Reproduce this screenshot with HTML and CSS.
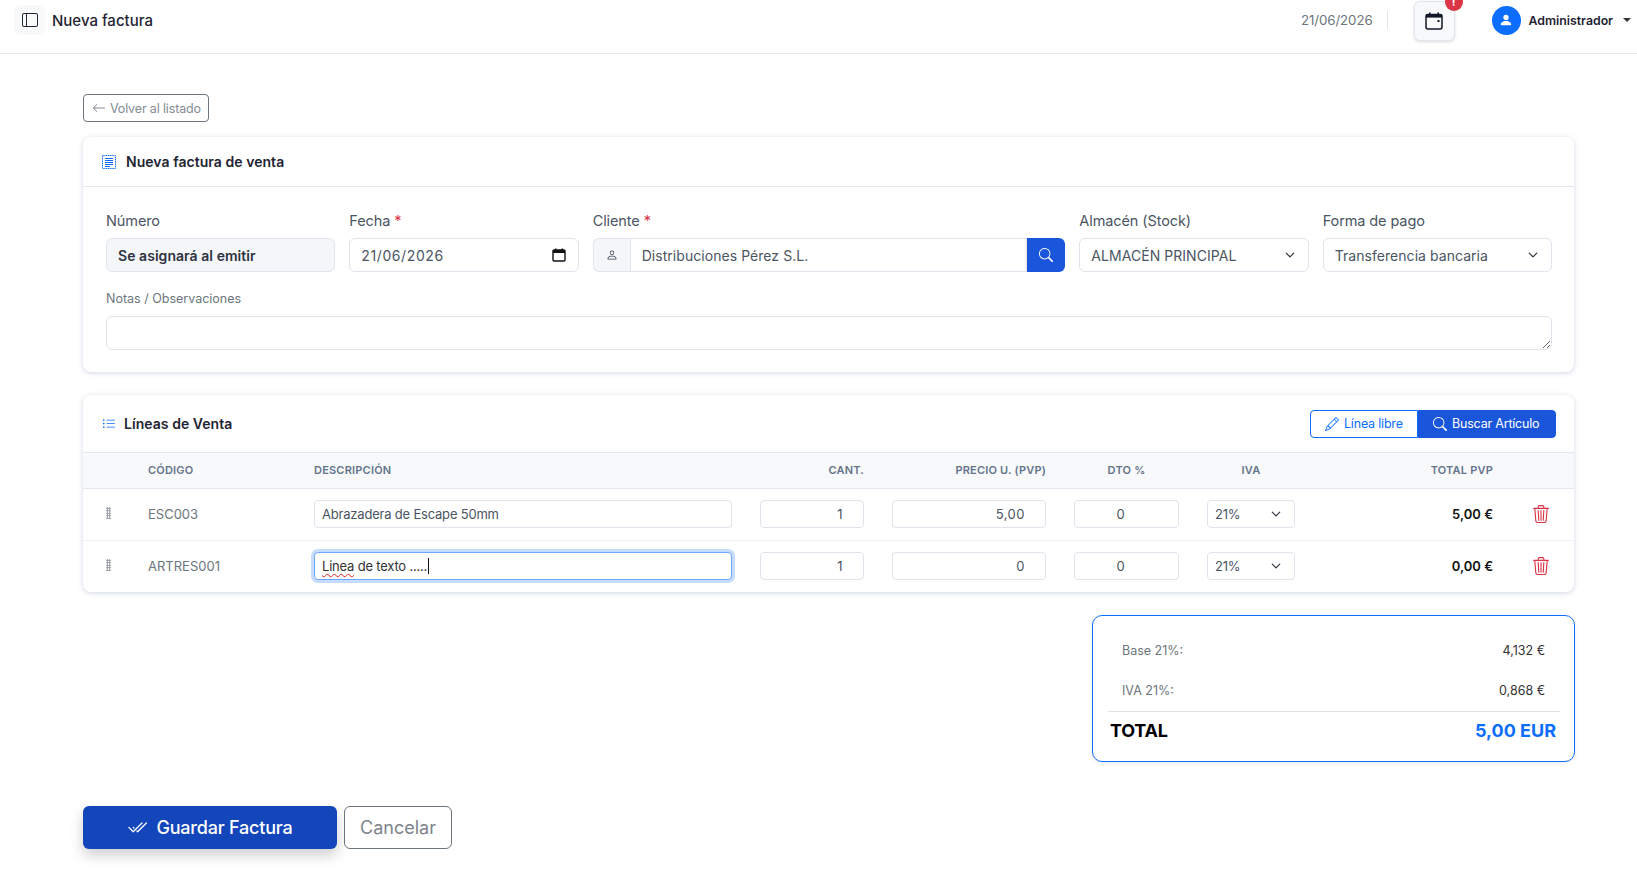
FILE: index.html
```html
<!DOCTYPE html>
<html lang="es">
<head>
  <meta charset="UTF-8" />
  <meta name="viewport" content="width=device-width, initial-scale=1.0"/>
  <title>Nueva factura</title>
  <link rel="stylesheet" href="styles.css">
</head>
<body>

  <header class="topbar">
    <button class="sidebar-toggle">
      <svg width="16" height="16" viewBox="0 0 16 16" fill="currentColor"><path d="M0 3a2 2 0 0 1 2-2h12a2 2 0 0 1 2 2v10a2 2 0 0 1-2 2H2a2 2 0 0 1-2-2V3zm5-1v12h9a1 1 0 0 0 1-1V3a1 1 0 0 0-1-1H5zM4 2H2a1 1 0 0 0-1 1v10a1 1 0 0 0 1 1h2V2z"/></svg>
    </button>
    <h1 class="page-title">Nueva factura</h1>
    <div class="topbar-right">
      <span class="top-date">21/06/2026</span>
      <span class="top-sep"></span>
      <button class="calendar-btn">
        <svg width="18" height="18" viewBox="0 0 18 18"><rect x="1" y="2.5" width="16" height="14.5" rx="2" fill="none" stroke="#111827" stroke-width="1.5"/><rect x="1" y="2" width="16" height="3.6" fill="#111827"/><rect x="4" y="0.5" width="1.6" height="2.5" fill="#111827"/><rect x="12.4" y="0.5" width="1.6" height="2.5" fill="#111827"/><rect x="12.5" y="8" width="2" height="2" fill="#111827"/></svg>
        <span class="calendar-badge">!</span>
      </button>
      <div class="user">
        <span class="avatar">
          <svg width="14" height="14" viewBox="0 0 16 16" fill="#fff"><path d="M8 8a3 3 0 1 0 0-6 3 3 0 0 0 0 6zM3 14s-1 0-1-1 1-4 6-4 6 3 6 4-1 1-1 1H3z"/></svg>
        </span>
        <span class="user-name">Administrador</span>
        <span class="user-caret"></span>
      </div>
    </div>
  </header>

  <main class="content">
    <a class="btn-back" href="#">
      <svg width="14" height="14" viewBox="0 0 16 16" fill="currentColor"><path d="M15 8a.5.5 0 0 0-.5-.5H2.707l3.147-3.146a.5.5 0 1 0-.708-.708l-4 4a.5.5 0 0 0 0 .708l4 4a.5.5 0 0 0 .708-.708L2.707 8.5H14.5A.5.5 0 0 0 15 8z"/></svg>
      Volver al listado
    </a>

    <section class="card">
      <div class="card-head">
        <svg class="head-icon" width="14" height="14" viewBox="0 0 14 14" fill="none" stroke="#0d6efd"><rect x="0.5" y="0.5" width="13" height="13" stroke-dasharray="1.2 .6"/><path d="M3 3.5h8M3 5.5h8M3 7.5h8M3 9.5h8M3 11.5h5"/></svg>
        <h2>Nueva factura de venta</h2>
      </div>
      <div class="form-grid">
        <div class="field span-2">
          <label>Número</label>
          <input class="input input-readonly" type="text" value="Se asignará al emitir" readonly />
        </div>
        <div class="field span-2">
          <label>Fecha <em>*</em></label>
          <div class="date-box">
            <input class="input input-date" type="text" value="21/06/2026" />
            <svg width="14" height="14" viewBox="0 0 14 14"><rect x="1" y="2" width="12" height="11" rx="1" fill="none" stroke="#111" stroke-width="1.4"/><rect x="1" y="2" width="12" height="3" fill="#111"/><rect x="3" y="0.5" width="1.5" height="2" fill="#111"/><rect x="9.5" y="0.5" width="1.5" height="2" fill="#111"/></svg>
          </div>
        </div>
        <div class="field span-4">
          <label>Cliente <em>*</em></label>
          <div class="input-group">
            <span class="group-icon">
              <svg width="12" height="12" viewBox="0 0 16 16" fill="#374151"><path d="M8 8a3 3 0 1 0 0-6 3 3 0 0 0 0 6zm2-3a2 2 0 1 1-4 0 2 2 0 0 1 4 0zm4 8c0 1-1 1-1 1H3s-1 0-1-1 1-4 6-4 6 3 6 4zm-1-.004c-.001-.246-.154-.986-.832-1.664C11.516 10.68 10.289 10 8 10c-2.29 0-3.516.68-4.168 1.332-.678.678-.83 1.418-.832 1.664h10z"/></svg>
            </span>
            <input class="input" type="text" value="Distribuciones Pérez S.L." />
            <button class="group-btn">
              <svg width="14" height="14" viewBox="0 0 16 16" fill="#fff"><path d="M11.742 10.344a6.5 6.5 0 1 0-1.397 1.398h-.001c.03.04.062.078.098.115l3.85 3.85a1 1 0 0 0 1.415-1.414l-3.85-3.85a1.007 1.007 0 0 0-.115-.1zM12 6.5a5.5 5.5 0 1 1-11 0 5.5 5.5 0 0 1 11 0z"/></svg>
            </button>
          </div>
        </div>
        <div class="field span-2">
          <label>Almacén (Stock)</label>
          <select class="input select"><option>ALMACÉN PRINCIPAL</option></select>
        </div>
        <div class="field span-2">
          <label>Forma de pago</label>
          <select class="input select"><option>Transferencia bancaria</option></select>
        </div>
        <div class="field span-12">
          <label class="label-small">Notas / Observaciones</label>
          <textarea class="input notes"></textarea>
        </div>
      </div>
    </section>

    <section class="card card-lines">
      <div class="card-head lines-head">
        <svg class="head-icon" width="14" height="14" viewBox="0 0 16 16" fill="#0d6efd"><path fill-rule="evenodd" d="M5 11.5a.5.5 0 0 1 .5-.5h9a.5.5 0 0 1 0 1h-9a.5.5 0 0 1-.5-.5zm0-4a.5.5 0 0 1 .5-.5h9a.5.5 0 0 1 0 1h-9a.5.5 0 0 1-.5-.5zm0-4a.5.5 0 0 1 .5-.5h9a.5.5 0 0 1 0 1h-9a.5.5 0 0 1-.5-.5zm-3 1a1 1 0 1 0 0-2 1 1 0 0 0 0 2zm0 4a1 1 0 1 0 0-2 1 1 0 0 0 0 2zm0 4a1 1 0 1 0 0-2 1 1 0 0 0 0 2z"/></svg>
        <h2>Líneas de Venta</h2>
        <div class="btn-group">
          <button class="btn-free">
            <svg width="14" height="14" viewBox="0 0 16 16" fill="currentColor"><path d="M12.146.146a.5.5 0 0 1 .708 0l3 3a.5.5 0 0 1 0 .708l-10 10a.5.5 0 0 1-.168.11l-5 2a.5.5 0 0 1-.65-.65l2-5a.5.5 0 0 1 .11-.168l10-10zM11.207 2.5 13.5 4.793 14.793 3.5 12.5 1.207 11.207 2.5zm1.586 3L10.5 3.207 4 9.707V10h.5a.5.5 0 0 1 .5.5v.5h.5a.5.5 0 0 1 .5.5v.5h.293l6.5-6.5zm-9.761 5.175-.106.106-1.528 3.821 3.821-1.528.106-.106A.5.5 0 0 1 5 12.5V12h-.5a.5.5 0 0 1-.5-.5V11h-.5a.5.5 0 0 1-.468-.325z"/></svg>
            Línea libre
          </button>
          <button class="btn-search">
            <svg width="14" height="14" viewBox="0 0 16 16" fill="currentColor"><path d="M11.742 10.344a6.5 6.5 0 1 0-1.397 1.398h-.001c.03.04.062.078.098.115l3.85 3.85a1 1 0 0 0 1.415-1.414l-3.85-3.85a1.007 1.007 0 0 0-.115-.1zM12 6.5a5.5 5.5 0 1 1-11 0 5.5 5.5 0 0 1 11 0z"/></svg>
            Buscar Artículo
          </button>
        </div>
      </div>

      <table class="lines">
        <colgroup>
          <col class="c-drag"><col class="c-code"><col class="c-desc"><col class="c-qty"><col class="c-price"><col class="c-dto"><col class="c-iva"><col class="c-total"><col class="c-del">
        </colgroup>
        <thead>
          <tr>
            <th></th>
            <th>CÓDIGO</th>
            <th>DESCRIPCIÓN</th>
            <th class="right">CANT.</th>
            <th class="right">PRECIO U. (PVP)</th>
            <th class="center">DTO %</th>
            <th class="center">IVA</th>
            <th class="right">TOTAL PVP</th>
            <th></th>
          </tr>
        </thead>
        <tbody>
          <tr>
            <td class="drag"><span class="grip"></span></td>
            <td class="code">ESC003</td>
            <td><input class="cell-input" type="text" value="Abrazadera de Escape 50mm" /></td>
            <td><input class="cell-input num" type="text" value="1" /></td>
            <td><input class="cell-input num" type="text" value="5,00" /></td>
            <td><input class="cell-input dto" type="text" value="0" /></td>
            <td><select class="cell-input select-sm"><option>21%</option></select></td>
            <td class="total">5,00 €</td>
            <td class="del">
              <svg width="18" height="18" viewBox="0 0 16 16" fill="#dc3545"><path d="M6.5 1h3a.5.5 0 0 1 .5.5v1H6v-1a.5.5 0 0 1 .5-.5ZM11 2.5v-1A1.5 1.5 0 0 0 9.5 0h-3A1.5 1.5 0 0 0 5 1.5v1H2.506a.58.58 0 0 0-.01 0H1.5a.5.5 0 0 0 0 1h.538l.853 10.66A2 2 0 0 0 4.885 16h6.23a2 2 0 0 0 1.994-1.84l.853-10.66h.538a.5.5 0 0 0 0-1h-.995a.59.59 0 0 0-.01 0H11Zm1.958 1-.846 10.58a1 1 0 0 1-.997.92h-6.23a1 1 0 0 1-.997-.92L3.042 3.5h9.916Zm-7.487 1a.5.5 0 0 1 .528.47l.5 8.5a.5.5 0 0 1-.998.06L5 5.03a.5.5 0 0 1 .47-.53Zm5.058 0a.5.5 0 0 1 .47.53l-.5 8.5a.5.5 0 1 1-.998-.06l.5-8.5a.5.5 0 0 1 .528-.47ZM8 4.5a.5.5 0 0 1 .5.5v8.5a.5.5 0 0 1-1 0V5a.5.5 0 0 1 .5-.5Z"/></svg>
            </td>
          </tr>
          <tr>
            <td class="drag"><span class="grip"></span></td>
            <td class="code">ARTRES001</td>
            <td>
              <div class="cell-input cell-focus"><span class="typo">Linea</span> de texto .....<span class="caret"></span></div>
            </td>
            <td><input class="cell-input num" type="text" value="1" /></td>
            <td><input class="cell-input num" type="text" value="0" /></td>
            <td><input class="cell-input dto" type="text" value="0" /></td>
            <td><select class="cell-input select-sm"><option>21%</option></select></td>
            <td class="total">0,00 €</td>
            <td class="del">
              <svg width="18" height="18" viewBox="0 0 16 16" fill="#dc3545"><path d="M6.5 1h3a.5.5 0 0 1 .5.5v1H6v-1a.5.5 0 0 1 .5-.5ZM11 2.5v-1A1.5 1.5 0 0 0 9.5 0h-3A1.5 1.5 0 0 0 5 1.5v1H2.506a.58.58 0 0 0-.01 0H1.5a.5.5 0 0 0 0 1h.538l.853 10.66A2 2 0 0 0 4.885 16h6.23a2 2 0 0 0 1.994-1.84l.853-10.66h.538a.5.5 0 0 0 0-1h-.995a.59.59 0 0 0-.01 0H11Zm1.958 1-.846 10.58a1 1 0 0 1-.997.92h-6.23a1 1 0 0 1-.997-.92L3.042 3.5h9.916Zm-7.487 1a.5.5 0 0 1 .528.47l.5 8.5a.5.5 0 0 1-.998.06L5 5.03a.5.5 0 0 1 .47-.53Zm5.058 0a.5.5 0 0 1 .47.53l-.5 8.5a.5.5 0 1 1-.998-.06l.5-8.5a.5.5 0 0 1 .528-.47ZM8 4.5a.5.5 0 0 1 .5.5v8.5a.5.5 0 0 1-1 0V5a.5.5 0 0 1 .5-.5Z"/></svg>
            </td>
          </tr>
        </tbody>
      </table>
    </section>

    <div class="totals-row">
      <div class="totals">
        <div class="totals-line"><span>Base 21%:</span><strong>4,132 €</strong></div>
        <div class="totals-line"><span>IVA 21%:</span><strong>0,868 €</strong></div>
        <div class="totals-final"><span>TOTAL</span><strong>5,00 EUR</strong></div>
      </div>
    </div>

    <div class="actions">
      <button class="btn-save">
        <svg width="20" height="20" viewBox="0 0 16 16" fill="currentColor"><path d="M12.354 4.354a.5.5 0 0 0-.708-.708L5 10.293 1.854 7.146a.5.5 0 1 0-.708.708l3.5 3.5a.5.5 0 0 0 .708 0l7-7zm-4.208 7-.896-.897.707-.707.543.543 6.646-6.647a.5.5 0 0 1 .708.708l-7 7a.5.5 0 0 1-.708 0z"/><path d="m5.354 7.146.896.897-.707.707-.897-.896a.5.5 0 1 1 .708-.708z"/></svg>
        Guardar Factura
      </button>
      <button class="btn-cancel">Cancelar</button>
    </div>
  </main>

</body>
</html>
```

FILE: styles.css
```css
* {
  box-sizing: border-box;
}

body {
  margin: 0;
  font-family: 'Inter', 'Liberation Sans', sans-serif;
  color: #212529;
  background: #fff;
  height: 881px;
  overflow: hidden;
}

button {
  font-family: inherit;
  cursor: pointer;
}

/* top bar */
.topbar {
  display: flex;
  align-items: center;
  height: 54px;
  padding: 0 0 13px 14px;
  border-bottom: 1px solid #e2e6ef;
}

.sidebar-toggle {
  display: flex;
  align-items: center;
  justify-content: center;
  width: 31px;
  height: 30px;
  border: none;
  border-radius: 6px;
  background: #f8f9fb;
  color: #1f2937;
}

.page-title {
  margin: 0 0 0 7px;
  font-size: 15px;
  font-weight: 500;
  color: #1f2433;
}

.topbar-right {
  margin-left: auto;
  display: flex;
  align-items: center;
}

.top-date {
  font-size: 13.3px;
  color: #6c757d;
  letter-spacing: -0.1px;
}

.top-sep {
  width: 1px;
  height: 18px;
  margin: 0 26px 0 14px;
  background: #dfe3ea;
}

.calendar-btn {
  position: relative;
  display: flex;
  align-items: center;
  justify-content: center;
  width: 41px;
  height: 40px;
  margin-top: 1px;
  border: 1px solid #e2e6ef;
  border-radius: 6px;
  background: #f8f9fb;
  box-shadow: 0 1px 3px rgba(0, 0, 0, 0.15);
}

.calendar-badge {
  position: absolute;
  top: -9px;
  right: -9px;
  width: 18px;
  height: 18px;
  border-radius: 50%;
  background: #dc3545;
  color: #fff;
  font-size: 11px;
  font-weight: 700;
  line-height: 18px;
  text-align: center;
}

.user {
  display: flex;
  align-items: center;
  margin-left: 37px;
  padding-right: 6px;
}

.avatar {
  display: flex;
  align-items: center;
  justify-content: center;
  width: 29px;
  height: 29px;
  border-radius: 50%;
  background: #0d6efd;
}

.user-name {
  margin-left: 8px;
  font-size: 12.3px;
  font-weight: 600;
  color: #1f2433;
}

.user-caret {
  width: 0;
  height: 0;
  margin-left: 10px;
  border-top: 4px solid #333;
  border-left: 4px solid transparent;
  border-right: 4px solid transparent;
}

/* content */
.content {
  padding: 40px 63px 0 83px;
}

.btn-back {
  display: inline-flex;
  align-items: center;
  gap: 4px;
  height: 28px;
  padding: 0 7px 0 8px;
  border: 1px solid #6c757d;
  border-radius: 4px;
  font-size: 12.5px;
  color: #858c94;
  text-decoration: none;
  letter-spacing: -0.15px;
}

.card {
  margin-top: 15px;
  border-radius: 8px;
  background: #fff;
  box-shadow: 0 1px 5px rgba(120, 135, 170, 0.35);
}

.card-head {
  display: flex;
  align-items: center;
  height: 50px;
  padding: 0 19px;
  border-bottom: 1px solid #e2e6ef;
}

.card-head h2 {
  margin: 0 0 0 8px;
  font-size: 14px;
  font-weight: 600;
  color: #1f2433;
  letter-spacing: 0.05px;
}

.head-icon {
  flex: none;
  margin-right: 2px;
}

.form-grid {
  display: grid;
  grid-template-columns: repeat(12, 1fr);
  column-gap: 14px;
  padding: 25px 22px 22px 23px;
}

.field label {
  display: block;
  height: 18px;
  margin-bottom: 8px;
  font-size: 14.5px;
  line-height: 18px;
  color: #4b5563;
  letter-spacing: -0.1px;
}

.field em {
  font-style: normal;
  color: #dc3545;
}

.span-2 { grid-column: span 2; }
.span-4 { grid-column: span 4; }
.span-12 { grid-column: span 12; margin-top: 19px; }

.field .label-small {
  height: 16px;
  margin-bottom: 9px;
  font-size: 12.5px;
  line-height: 16px;
  color: #6c757d;
  letter-spacing: 0;
}

.input {
  display: block;
  width: 100%;
  height: 34px;
  padding: 0 11px;
  border: 1px solid #e0e3eb;
  border-radius: 6px;
  background: #fff;
  font-family: inherit;
  font-size: 14px;
  color: #4b5563;
  letter-spacing: 0.05px;
  outline: none;
}

.input-readonly {
  background: #f5f6f9;
  font-weight: 600;
  color: #2d3340;
}

.input-date {
  letter-spacing: 0.6px;
}

.date-box {
  position: relative;
}

.date-box svg {
  position: absolute;
  top: 10px;
  right: 13px;
}

.input-group {
  display: flex;
  height: 34px;
}

.group-icon {
  flex: none;
  display: flex;
  align-items: center;
  justify-content: center;
  width: 37px;
  border: 1px solid #e0e3eb;
  border-right: none;
  border-radius: 6px 0 0 6px;
  background: #f5f6f9;
}

.input-group .input {
  flex: 1;
  min-width: 0;
  border-radius: 0;
}

.group-btn {
  flex: none;
  display: flex;
  align-items: center;
  justify-content: center;
  width: 38px;
  border: none;
  border-radius: 0 6px 6px 0;
  background: #1a56db;
}

.select {
  appearance: none;
  background-image: url("data:image/svg+xml,%3csvg xmlns='http://www.w3.org/2000/svg' viewBox='0 0 16 16'%3e%3cpath fill='none' stroke='%23343a40' stroke-linecap='round' stroke-linejoin='round' stroke-width='2' d='m2 5 6 6 6-6'/%3e%3c/svg%3e");
  background-repeat: no-repeat;
  background-position: right 13px center;
  background-size: 10px 10px;
}

.notes {
  height: 34px;
  padding: 6px 11px;
  resize: vertical;
}

/* lines card */
.card-lines {
  margin-top: 23px;
}

.lines-head {
  height: 58px;
}

.lines-head h2 {
  margin-left: 6px;
}

.btn-group {
  display: flex;
  margin-left: auto;
  margin-right: -1px;
}

.btn-group button {
  display: flex;
  align-items: center;
  gap: 5px;
  height: 28px;
  font-size: 12.5px;
  letter-spacing: -0.2px;
}

.btn-free {
  width: 108px;
  padding: 0 0 0 14px;
  border: 1px solid #0d6efd;
  border-radius: 4px 0 0 4px;
  background: #fff;
  color: #0d6efd;
}

.btn-search {
  width: 138px;
  padding: 0 0 0 14px;
  border: 1px solid #1a56db;
  border-radius: 0 4px 4px 0;
  background: #1a56db;
  color: #fff;
}

.lines {
  width: 100%;
  table-layout: fixed;
  border-collapse: collapse;
}

.c-drag { width: 51px; }
.c-code { width: 166px; }
.c-desc { width: 446px; }
.c-qty { width: 132px; }
.c-price { width: 182px; }
.c-dto { width: 133px; }
.c-iva { width: 116px; }
.c-total { width: 198px; }
.c-del { width: 67px; }

.lines th {
  height: 35px;
  padding: 0 14px;
  background: #f8f9fb;
  border-bottom: 1px solid #e2e6ef;
  font-size: 11px;
  font-weight: 600;
  color: #64748b;
  text-align: left;
  letter-spacing: 0.2px;
}

.lines td {
  height: 52px;
  padding: 0 14px;
  border-bottom: 1px solid #f1f3f7;
  font-size: 13px;
}

.lines tbody tr:last-child td {
  border-bottom: none;
}

.lines .right { text-align: right; }
.lines .center { text-align: center; }

.drag {
  text-align: center;
}

.grip {
  display: inline-block;
  width: 5px;
  height: 12px;
  background-image: radial-gradient(circle, #8a9099 0.9px, transparent 1px);
  background-size: 2.5px 2.5px;
}

.code {
  color: #6c757d;
}

.cell-input {
  display: block;
  width: 100%;
  height: 28px;
  padding: 0 7px;
  border: 1px solid #e0e3eb;
  border-radius: 4px;
  background: #fff;
  font-family: inherit;
  font-size: 13px;
  color: #4b5563;
  letter-spacing: -0.2px;
  outline: none;
}

.cell-input.num {
  padding-right: 20px;
  text-align: right;
  letter-spacing: 0.5px;
}

.cell-input.dto {
  padding-right: 19px;
  text-align: center;
}

.cell-focus {
  display: flex;
  align-items: center;
  border-color: #6ea8fe;
  box-shadow: 0 0 0 3px #c6dcfd;
  color: #333;
  white-space: pre;
}

.typo {
  text-decoration: underline wavy #e02020 1px;
  text-underline-offset: 2px;
}

.caret {
  width: 1px;
  height: 16px;
  margin-left: 1px;
  background: #111;
}

.select-sm {
  appearance: none;
  background-image: url("data:image/svg+xml,%3csvg xmlns='http://www.w3.org/2000/svg' viewBox='0 0 16 16'%3e%3cpath fill='none' stroke='%23343a40' stroke-linecap='round' stroke-linejoin='round' stroke-width='2' d='m2 5 6 6 6-6'/%3e%3c/svg%3e");
  background-repeat: no-repeat;
  background-position: right 13px center;
  background-size: 10px 10px;
}

.total {
  text-align: right;
  font-weight: 600;
  color: #111;
}

.del {
  text-align: center;
}

.del svg {
  display: inline-block;
  vertical-align: middle;
}

/* totals */
.totals-row {
  display: flex;
  justify-content: flex-end;
  margin-top: 23px;
  margin-right: -1px;
}

.totals {
  width: 483px;
  height: 147px;
  padding: 14px 14px 0 15px;
  border: 1px solid #0d6efd;
  border-radius: 10px;
  box-shadow: 0 1px 4px rgba(0, 0, 0, 0.08);
}

.totals-line {
  display: flex;
  justify-content: space-between;
  align-items: center;
  height: 40.5px;
  padding: 0 15px 0 14px;
  font-size: 12.5px;
  color: #6c757d;
}

.totals-line strong {
  font-weight: 400;
  color: #333;
}

.totals-final {
  display: flex;
  justify-content: space-between;
  align-items: center;
  height: 38px;
  padding: 0 4px 0 2px;
  border-top: 1px solid #dee2e6;
  font-size: 18px;
  font-weight: 700;
  color: #000;
  letter-spacing: -0.2px;
}

.totals-final strong {
  color: #0d6efd;
  font-weight: 700;
  letter-spacing: 0;
}

/* actions */
.actions {
  display: flex;
  gap: 7px;
  margin-top: 44px;
}

.btn-save {
  display: flex;
  align-items: center;
  justify-content: center;
  gap: 9px;
  width: 254px;
  height: 43px;
  border: none;
  border-radius: 6px;
  background: #1346bb;
  color: #fff;
  font-size: 18px;
  font-weight: 500;
  letter-spacing: -0.2px;
  box-shadow: 0 6px 14px rgba(0, 0, 0, 0.2);
}

.btn-cancel {
  width: 108px;
  height: 43px;
  border: 1px solid #6c757d;
  border-radius: 6px;
  background: #fff;
  color: #7d848c;
  font-size: 18px;
}
```
